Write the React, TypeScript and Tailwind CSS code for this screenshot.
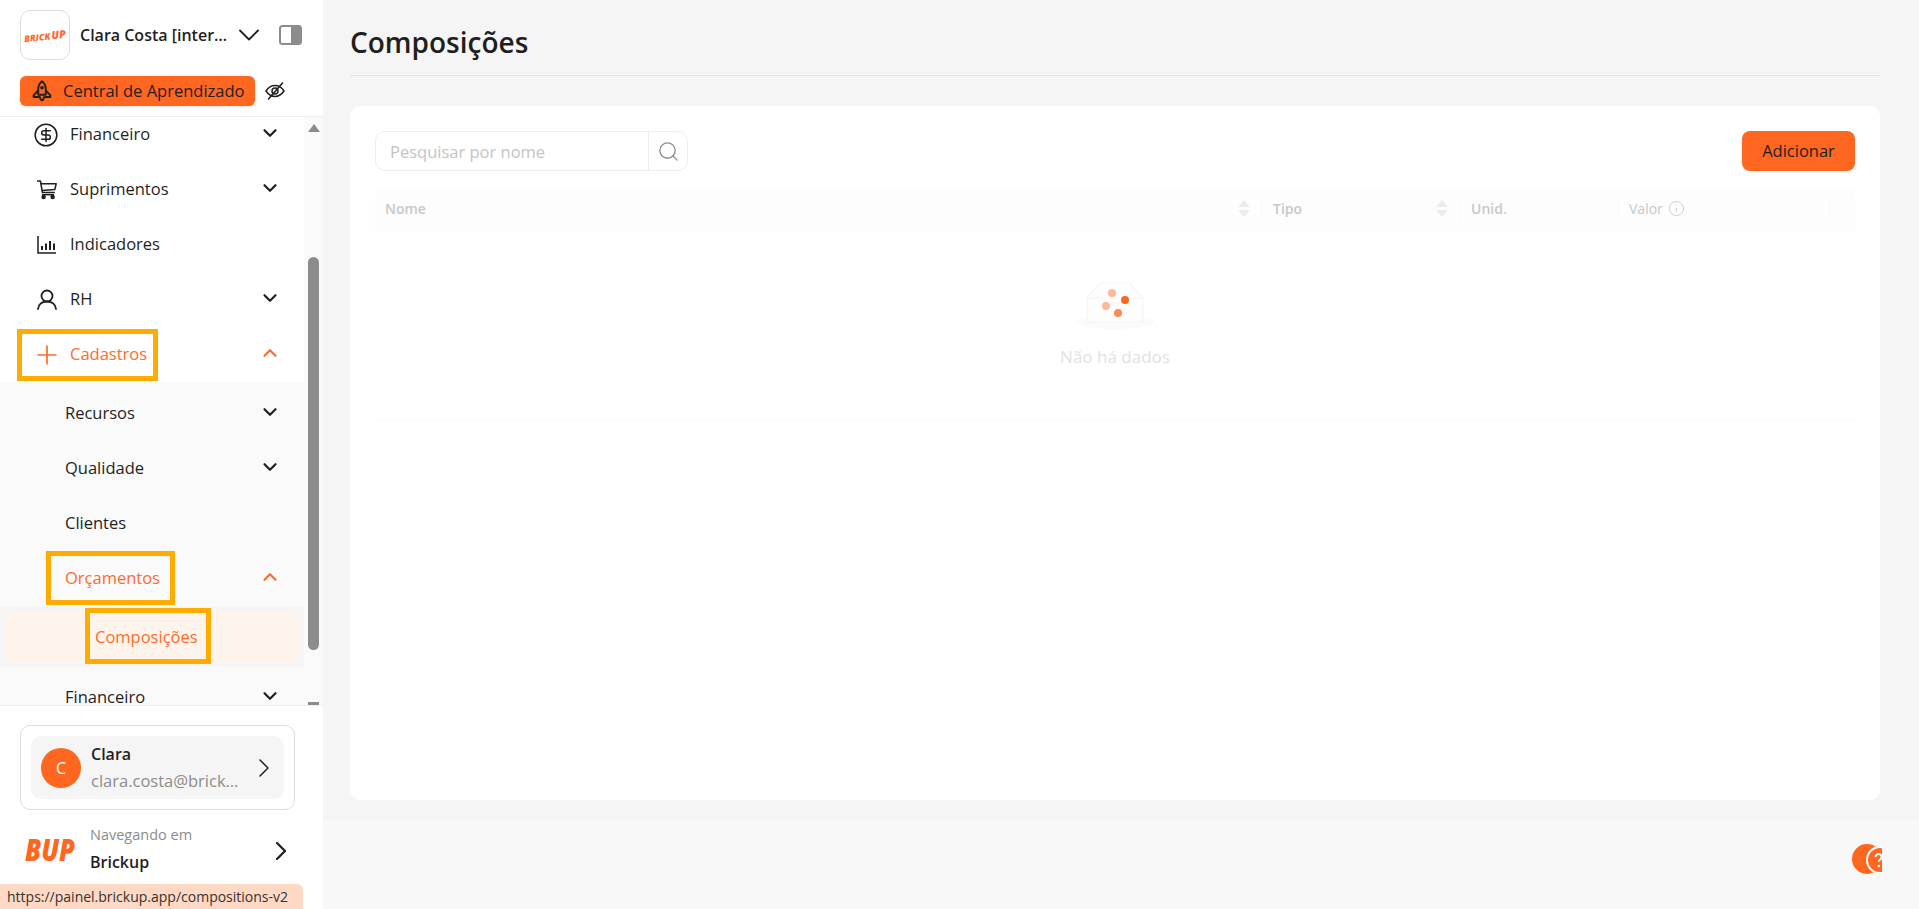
import { ChevronDown, ChevronRight, ChevronUp, CircleDollarSign, Search, Info } from 'lucide-react';
import type { ReactNode } from 'react';

const font = { fontFamily: '"Open Sans", "Noto Sans", sans-serif' };

function RocketIcon() {
  return (
    <svg width="22" height="22" viewBox="0 0 20 20" fill="none" stroke="currentColor" strokeWidth="1.7" strokeLinejoin="round" strokeLinecap="round">
      <path d="M10 1.2c2.6 2 3.4 4.6 3.4 7.2v5H6.6v-5c0-2.6.8-5.2 3.4-7.2z" />
      <path d="M6.6 9.5 2.4 14v1.4h4.2M13.4 9.5l4.2 4.5v1.4h-4.2" />
      <path d="M8 15.5c.2 1.4 1 2.4 2 3 1-.6 1.8-1.6 2-3" />
      <circle cx="10" cy="7" r="0.8" />
    </svg>
  );
}

function EyeSlashIcon() {
  return (
    <svg width="20" height="20" viewBox="0 0 20 20" fill="none" stroke="currentColor" strokeWidth="1.5" strokeLinecap="round">
      <path d="M1 10c2.4-3.6 5.4-5.4 9-5.4s6.6 1.8 9 5.4c-2.4 3.6-5.4 5.4-9 5.4S3.400 13.600 1 10z" />
      <circle cx="10" cy="10" r="3" />
      <path d="M3.500 18 17.500 2" strokeWidth="1.6" />
    </svg>
  );
}

function CartIcon() {
  return (
    <svg width="20" height="20" viewBox="0 0 20 20" fill="none" stroke="currentColor" strokeWidth="1.5" strokeLinejoin="round">
      <path d="M0 1h3.400l2 11.500h12.400" />
      <path d="M3.900 3.800h15.300l-1.400 5.800L4.900 10.600" />
      <circle cx="6.600" cy="17" r="1.500" fill="currentColor" />
      <circle cx="15.600" cy="17" r="1.500" fill="currentColor" />
      <path d="M5 14.700h12" />
    </svg>
  );
}

function BarsIcon() {
  return (
    <svg width="19" height="18" viewBox="0 0 19 18" fill="none" stroke="currentColor" strokeWidth="1.5">
      <path d="M1 0v17h18" />
      <path d="M5 10v4M9 7.500V14M13 5v9M17 7.500V14" strokeWidth="2" />
    </svg>
  );
}

function UserIcon() {
  return (
    <svg width="20" height="21" viewBox="0 0 20 21" fill="none" stroke="currentColor" strokeWidth="1.8" strokeLinecap="round">
      <circle cx="10" cy="7" r="5.500" />
      <path d="M1 20c.4-4.600 4-7.500 9-7.500s8.600 2.900 9 7.500" />
    </svg>
  );
}

function PlusIcon() {
  return (
    <svg width="20" height="20" viewBox="0 0 20 20" stroke="currentColor" strokeWidth="1.7">
      <path d="M0.500 10h19M10 0.500v19" />
    </svg>
  );
}

function PanelIcon() {
  return (
    <svg width="23" height="20" viewBox="0 0 23 20">
      <rect x="1" y="1" width="21" height="18" rx="2.500" fill="#fff" stroke="#8c8c8c" strokeWidth="2" />
      <path d="M12 1h7.500A2.500 2.500 0 0 1 22 3.500v13a2.500 2.500 0 0 1-2.500 2.500H12z" fill="#8c8c8c" />
    </svg>
  );
}

function EmptyIcon() {
  return (
    <svg width="80" height="52" viewBox="0 0 80 52" fill="none">
      <ellipse cx="40" cy="43" rx="39" ry="7" fill="#fbfbfb" />
      <path d="M12 19 25 4h30l13 15v21a3 3 0 0 1-3 3H15a3 3 0 0 1-3-3z" fill="#fdfdfd" stroke="#f5f5f5" strokeWidth="1.2" />
      <path d="M12 19h17l2 5h18l2-5h17" stroke="#f5f5f5" strokeWidth="1.2" />
      <circle cx="37" cy="14" r="4" fill="#ffb899" />
      <circle cx="50" cy="21" r="4" fill="#ff6620" />
      <circle cx="31" cy="27" r="4" fill="#ffb899" />
      <circle cx="43" cy="34" r="4" fill="#ff8a55" />
    </svg>
  );
}

function HelpBubble() {
  return (
    <svg width="30" height="30" viewBox="0 0 30 30">
      <circle cx="15" cy="15" r="15" fill="#ff6620" />
      <circle cx="28" cy="16" r="13" fill="#ff6620" stroke="#fff" strokeWidth="2" />
      <rect x="30" y="0" width="6" height="30" fill="#f8f8f8" />
      <path d="M23.500 13a3 3 0 1 1 4.600 2.600c-1 .6-1.300 1.200-1.300 2.200" fill="none" stroke="#fff" strokeWidth="2" />
      <circle cx="26.800" cy="22" r="1.300" fill="#fff" />
    </svg>
  );
}

function Sorter() {
  return (
    <span className="flex flex-col gap-[3px] items-center">
      <span className="w-0 h-0 border-x-[6px] border-x-transparent border-b-[7px] border-b-[#ececec]" />
      <span className="w-0 h-0 border-x-[6px] border-x-transparent border-t-[7px] border-t-[#ececec]" />
    </span>
  );
}

function Highlight({ className }: { className: string }) {
  return <span className={`absolute border-[5px] border-[#ffab00] pointer-events-none ${className}`} />;
}

interface NavRowProps {
  icon?: ReactNode;
  label: string;
  open?: boolean;
  active?: boolean;
  chevron?: boolean;
  sub?: boolean;
  children?: ReactNode;
}

function NavRow({ icon, label, open, active, chevron = true, sub, children }: NavRowProps) {
  const color = active ? 'text-[#ff6b2c]' : 'text-[#1f1f1f]';
  return (
    <div className={`relative h-[55px] flex items-center text-[16.5px] ${color}`}>
      {sub ? (
        <span className="pl-[65px]">{label}</span>
      ) : (
        <>
          <span className="w-[70px] pl-[35px] flex items-center">{icon}</span>
          <span>{label}</span>
        </>
      )}
      {chevron && (
        <span className="absolute left-[259px] -mt-[3px]">
          {open ? <ChevronUp size={22} strokeWidth={2.4} /> : <ChevronDown size={22} strokeWidth={2.4} />}
        </span>
      )}
      {children}
    </div>
  );
}

export default function App() {
  return (
    <div className="flex h-screen overflow-hidden bg-[#f5f5f5] text-[#1f1f1f]" style={font}>
      {/* Menu lateral */}
      <aside className="w-[323px] shrink-0 bg-white flex flex-col relative">
        <div className="h-[117px] shrink-0 border-b border-[#eeeeee] pl-5">
          <div className="flex items-center pt-[10px] h-[60px]">
            <div className="w-[50px] h-[50px] rounded-[10px] border border-[#dddddd] flex items-center justify-center">
              <span className="flex items-end -rotate-6 text-[#ff6b2c] font-extrabold italic leading-none whitespace-nowrap">
                <span className="text-[9px]">BRICK</span>
                <span className="text-[11px] ml-px">UP</span>
              </span>
            </div>
            <span className="ml-[10px] w-[152px] font-semibold text-base truncate">Clara Costa [internal]</span>
            <ChevronDown size={36} strokeWidth={1.2} className="-ml-px" />
            <span className="ml-3 flex"><PanelIcon /></span>
          </div>
          <div className="flex items-center mt-[16px]">
            <div className="w-[235px] h-[30px] rounded-md bg-[#ff6620] shadow-sm flex items-center pl-[11px] gap-[10px] text-[16.5px] whitespace-nowrap">
              <RocketIcon />
              <span>Central de Aprendizado</span>
            </div>
            <span className="ml-[10px] flex"><EyeSlashIcon /></span>
          </div>
        </div>

        <div className="h-[588px] flex overflow-hidden">
          <div className="w-[304px] overflow-hidden">
            <div className="-mt-[10px]">
              <NavRow icon={<CircleDollarSign size={26} strokeWidth={1.4} className="-ml-[2px]" />} label="Financeiro" />
              <NavRow icon={<span className="ml-[2px] flex"><CartIcon /></span>} label="Suprimentos" />
              <NavRow icon={<span className="ml-[2px] flex"><BarsIcon /></span>} label="Indicadores" chevron={false} />
              <NavRow icon={<span className="ml-[2px] flex"><UserIcon /></span>} label="RH" />
              <NavRow icon={<span className="ml-[2px] flex"><PlusIcon /></span>} label="Cadastros" open active>
                <Highlight className="left-[17px] top-[2px] w-[141px] h-[52px]" />
              </NavRow>
              <div className="bg-[#fafafa] mt-px pt-[3px] h-[340px]">
                <NavRow label="Recursos" sub />
                <NavRow label="Qualidade" sub />
                <NavRow label="Clientes" sub chevron={false} />
                <NavRow label="Orçamentos" sub open active>
                  <Highlight className="left-[46px] top-0 w-[129px] h-[54px]" />
                </NavRow>
                <div className="bg-[#f5f5f5] h-[60px] py-[5px] mt-[1px]">
                  <div className="relative h-[50px] mx-[5px] rounded-[10px] bg-[#fff4ec] flex items-center pl-[90px] text-[16.5px] text-[#ff6b2c]">
                    Composições
                    <Highlight className="left-[80px] -top-[4px] w-[126px] h-[56px]" />
                  </div>
                </div>
                <div className="mt-[3px]">
                  <NavRow label="Financeiro" sub />
                </div>
              </div>
            </div>
          </div>
          {/* Barra de rolagem */}
          <div className="w-[19px] bg-[#fafafa] flex flex-col items-center">
            <span className="mt-[7px] w-0 h-0 border-x-[6px] border-x-transparent border-b-[8px] border-b-[#8c8c8c]" />
            <span className="mt-[125px] w-[11px] h-[393px] rounded-full bg-[#8c8c8c]" />
            <span className="mt-[52px] w-[11px] h-[3px] bg-[#8c8c8c]" />
          </div>
        </div>

        <div className="flex-1 border-t border-[#eeeeee] pt-[19px] px-5">
          <div className="w-[275px] h-[85px] rounded-[10px] border border-[#dddddd] p-[10px]">
            <div className="h-[63px] rounded-[10px] bg-[#f5f5f5] flex items-center pl-[10px]">
              <span className="w-10 h-10 rounded-full bg-[#ff6620] text-white flex items-center justify-center text-base shrink-0">C</span>
              <div className="ml-[10px] w-[152px] leading-[27px]">
                <div className="font-semibold text-base leading-[26px]">Clara</div>
                <div className="text-[#8c8c8c] text-[16.5px] truncate">clara.costa@brickup.com</div>
              </div>
              <ChevronRight size={32} strokeWidth={1.1} className="ml-[5px]" />
            </div>
          </div>
          <div className="flex items-center mt-[15px]">
            <span className="w-[50px] ml-[5px] -mt-[4px] text-[#ff6620] text-[30px] font-extrabold italic leading-none scale-x-[0.85] origin-left">BUP</span>
            <div className="ml-[15px] w-[170px]">
              <div className="text-[14.5px] text-[#8c8c8c] leading-[20px]">Navegando em</div>
              <div className="font-semibold text-base leading-[34px]">Brickup</div>
            </div>
            <ChevronRight size={32} strokeWidth={1.7} className="ml-[5px] -mt-[3px]" />
          </div>
        </div>

        {/* Barra de status do navegador */}
        <div className="absolute left-0 bottom-0 w-[303px] h-[25px] bg-[#ffd9c4] rounded-tr-md flex items-center pl-[7px] text-sm text-[#333333] whitespace-nowrap">
          https://painel.brickup.app/compositions-v2
        </div>
      </aside>

      {/* Conteúdo */}
      <main className="flex-1 flex flex-col min-w-0">
        <div className="flex-1 pl-[27px] pr-[39px]">
          <div className="h-[76px] border-b border-[#e4e4e4] flex items-center pt-[8px]">
            <h1 className="text-[28px] font-semibold text-[#1f1f1f]">Composições</h1>
          </div>
          <div className="mt-[30px] h-[694px] bg-white rounded-[10px] p-[25px]">
            <div className="flex items-center justify-between">
              <div className="flex h-[40px] w-[313px] rounded-[10px] border border-[#eeeeee]">
                <span className="flex-1 pl-[14px] pt-[3px] flex items-center text-[16.5px] text-[#c4c4c4]">Pesquisar por nome</span>
                <span className="w-[39px] border-l border-[#eeeeee] flex items-center justify-center text-[#8c8c8c]">
                  <Search size={23} strokeWidth={1.4} />
                </span>
              </div>
              <button className="w-[113px] h-[40px] rounded-[8px] bg-[#ff6620] text-[16.5px] text-[#1f1f1f]">Adicionar</button>
            </div>

            <div className="mt-[16px] h-[45px] pb-[2px] rounded-t-[10px] bg-[#fdfdfd] grid grid-cols-[887px_198px_159px_211px_1fr] items-center text-sm font-semibold text-[#c8c8c8]">
              <div className="flex items-center justify-between pl-[10px] pr-[11px] border-r border-[#f8f8f8] h-[22px]">Nome<Sorter /></div>
              <div className="flex items-center justify-between pl-[11px] pr-[11px] border-r border-[#f8f8f8] h-[22px]">Tipo<Sorter /></div>
              <div className="pl-[11px] border-r border-[#f8f8f8] h-[22px] flex items-center">Unid.</div>
              <div className="pl-[10px] border-r border-[#f8f8f8] h-[22px] flex items-center gap-[5px] font-medium">Valor<Info size={17} strokeWidth={1.2} /></div>
              <div />
            </div>

            <div className="h-[189px] border-b border-[#fafafa] flex flex-col items-center pt-[47px]">
              <EmptyIcon />
              <span className="mt-[13px] text-[17px] text-[#e2e2e2]">Não há dados</span>
            </div>
          </div>
        </div>
        <div className="h-[89px] shrink-0 bg-[#f8f8f8] flex justify-end pt-[24px] pr-[37px]">
          <HelpBubble />
        </div>
      </main>
    </div>
  );
}
